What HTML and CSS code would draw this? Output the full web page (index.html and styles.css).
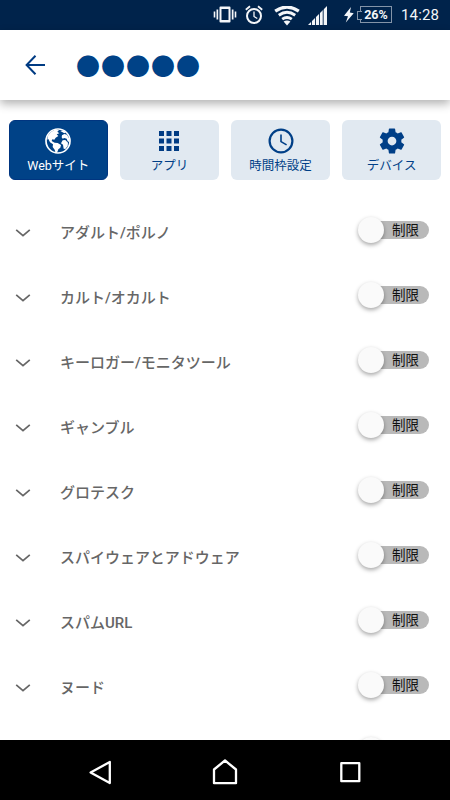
FILE: index.html
```html
<!DOCTYPE html>
<html lang="ja">
<head>
<meta charset="utf-8">
<title>Webサイト</title>
<link rel="stylesheet" href="styles.css">
</head>
<body>
<svg width="0" height="0" class="defs">
  <symbol id="chevron" viewBox="0 0 16 10"><path d="M1.2 1.8 8 7.6l6.8-5.8" fill="none" stroke="#666" stroke-width="1.7"/></symbol>
</svg>
<div class="status">
  <svg class="vibrate" width="24" height="20" viewBox="0 0 24 20" fill="#f4f6f9"><path fill-rule="evenodd" d="M7.5 1.5h9q1 0 1 1v14q0 1-1 1h-9q-1 0-1-1v-14q0-1 1-1zM8.5 4v11h7V4z"/><path d="M3.5 4.5h1.7v10H3.5zM18.8 4.5h1.7v10h-1.7zM.7 6.5h1.6v6H.7zM21.7 6.5h1.6v6h-1.6z"/></svg>
  <svg class="alarm" width="18" height="20" viewBox="0 0 18 20" fill="none" stroke="#f4f6f9"><circle cx="9" cy="11" r="7" stroke-width="2"/><path d="M9 6.5v5l3.3 2" stroke-width="1.3"/><path d="M.8 4.7 5 1.2M17.2 4.7 13 1.2" stroke-width="1.8"/></svg>
  <svg class="wifi" width="26" height="20" viewBox="0 0 26 20" fill="none" stroke="#f4f6f9"><path d="M1.2 5.1Q13-2.9 24.8 5.1" stroke-width="3.2"/><path d="M4.8 9.2Q13 3.4 21.2 9.2M8.2 13.1Q13 9.7 17.8 13.1" stroke-width="2.9"/><path d="M13 19.4 9.6 15.4Q13 13.4 16.4 15.4z" fill="#f4f6f9" stroke="none"/></svg>
  <svg class="signal" width="19" height="20" viewBox="0 0 19 20" fill="#f4f6f9"><path d="M0 19 19 0v19z"/><path d="M3.5 19v-5M7.5 19V9M11.5 19V5M15.2 19V1" stroke="#00234b" stroke-width=".9"/></svg>
  <svg class="bolt" width="10" height="16" viewBox="0 0 10 16" fill="#f4f6f9"><path d="M7 0 0 8.8l4 .5L1.8 15.5 9.7 6.2 5.8 5.5z"/></svg>
  <div class="battery"><span>26%</span></div>
  <div class="clock">14:28</div>
</div>
<header class="bar">
  <svg width="20" height="20" viewBox="0 0 20 20" fill="none" stroke="#003b83" stroke-width="2"><path d="M10.5 .8 1.6 10l8.9 9.2M1.6 10H20"/></svg>
  <h1>●●●●●</h1>
</header>
<main class="content">
  <nav class="tabs">
    <div class="tab active">
      <svg width="26" height="26" viewBox="0 0 78 78"><circle cx="39" cy="39" r="36" fill="none" stroke="#fff" stroke-width="5"/><path fill="#fff" d="M8 24 18 12 29 5l13 1-5 5 6 5-8 3 5 5-8 5-4 6-6-1-2 5 5 3 4 2 9 1 10 6-2 8-6 5-3 8-5 4-3-11-6-8 1-8-9-6-5-10-3 2zM46 9l9-2 8 6-5 3zM51 22l7-4 8 2 6 11 2 12-6-3-3-8-7-2-5 2-3-4zM53 37l8-1 8 8-1 10-7 9-5-1-2-12-6-4z"/></svg>
      <span>Webサイト</span>
    </div>
    <div class="tab">
      <svg width="26" height="26" viewBox="0 0 26 26" fill="#003b83"><path d="M3 3h5v5H3zM10.5 3h5v5h-5zM18 3h5v5h-5zM3 10.5h5v5H3zM10.5 10.5h5v5h-5zM18 10.5h5v5h-5zM3 18h5v5H3zM10.5 18h5v5h-5zM18 18h5v5h-5z"/></svg>
      <span>アプリ</span>
    </div>
    <div class="tab">
      <svg width="26" height="26" viewBox="0 0 26 26" fill="none" stroke="#003f87"><circle cx="13" cy="13" r="11.4" stroke-width="2.2"/><path d="M13 6.6v7l5.6 3.3" stroke-width="1.6"/></svg>
      <span>時間枠設定</span>
    </div>
    <div class="tab">
      <svg class="gear" width="30" height="30" viewBox="0 0 24 24" fill="#003f87"><path d="M19.43 12.98c.04-.32.07-.64.07-.98s-.03-.66-.07-.98l2.11-1.65c.19-.15.24-.42.12-.64l-2-3.46c-.12-.22-.39-.3-.61-.22l-2.49 1c-.52-.4-1.08-.73-1.69-.98l-.38-2.65C14.46 2.18 14.25 2 14 2h-4c-.25 0-.46.18-.49.42l-.38 2.65c-.61.25-1.17.59-1.69.98l-2.49-1c-.23-.09-.49 0-.61.22l-2 3.46c-.13.22-.07.49.12.64l2.11 1.65c-.04.32-.07.65-.07.98s.03.66.07.98l-2.11 1.65c-.19.15-.24.42-.12.64l2 3.46c.12.22.39.3.61.22l2.49-1c.52.4 1.08.73 1.69.98l.38 2.65c.03.24.24.42.49.42h4c.25 0 .46-.18.49-.42l.38-2.65c.61-.25 1.17-.59 1.69-.98l2.49 1c.23.09.49 0 .61-.22l2-3.46c.12-.22.07-.49-.12-.64l-2.11-1.65zM12 15.5c-1.93 0-3.5-1.57-3.5-3.5s1.57-3.5 3.5-3.5 3.5 1.57 3.5 3.5-1.57 3.5-3.5 3.5z"/></svg>
      <span>デバイス</span>
    </div>
  </nav>
  <div class="list">
    <div class="row"><svg><use href="#chevron"/></svg><span class="name">アダルト/ポルノ</span><div class="switch"><i></i><span>制限</span></div></div>
    <div class="row"><svg><use href="#chevron"/></svg><span class="name">カルト/オカルト</span><div class="switch"><i></i><span>制限</span></div></div>
    <div class="row"><svg><use href="#chevron"/></svg><span class="name">キーロガー/モニタツール</span><div class="switch"><i></i><span>制限</span></div></div>
    <div class="row"><svg><use href="#chevron"/></svg><span class="name">ギャンブル</span><div class="switch"><i></i><span>制限</span></div></div>
    <div class="row"><svg><use href="#chevron"/></svg><span class="name">グロテスク</span><div class="switch"><i></i><span>制限</span></div></div>
    <div class="row"><svg><use href="#chevron"/></svg><span class="name">スパイウェアとアドウェア</span><div class="switch"><i></i><span>制限</span></div></div>
    <div class="row"><svg><use href="#chevron"/></svg><span class="name">スパムURL</span><div class="switch"><i></i><span>制限</span></div></div>
    <div class="row"><svg><use href="#chevron"/></svg><span class="name">ヌード</span><div class="switch"><i></i><span>制限</span></div></div>
    <div class="row"><div class="switch"><i></i></div></div>
  </div>
</main>
<footer class="navbar">
  <svg width="26" height="28" viewBox="0 0 26 28"><path d="M22.8 4 3.6 14.5 22.8 25z"/></svg>
  <svg width="26" height="28" viewBox="0 0 26 28"><path d="M2 11.5 13 2.5l11 9v13.7H2z"/></svg>
  <svg width="26" height="28" viewBox="0 0 26 28"><path d="M4.3 5.2h18v18h-18z"/></svg>
</footer>
</body>
</html>
```
FILE: styles.css
```css
* { box-sizing: border-box; }
body {
  margin: 0;
  width: 450px;
  height: 800px;
  overflow: hidden;
  display: flex;
  flex-direction: column;
  background: #fff;
  font-family: Roboto, "Noto Sans CJK JP", sans-serif;
}
.defs { position: absolute; }
svg { display: block; flex: none; }
.status {
  height: 30px;
  flex: none;
  background: #00234b;
  color: #f4f6f9;
  display: flex;
  align-items: center;
  padding-left: 213px;
}
.alarm { margin-left: 8px; }
.wifi { margin: 2px 0 0 11px; }
.signal { margin: 2px 0 0 8px; }
.bolt { margin-left: 17px; }
.battery {
  margin: -1px 0 0 6px;
  width: 32px;
  height: 17px;
  border: 1px solid #8494a8;
  font-size: 12.5px;
  font-weight: 700;
  line-height: 15px;
  text-align: center;
  position: relative;
}
.battery::before {
  content: "";
  position: absolute;
  left: -4px;
  top: 4px;
  width: 4px;
  height: 7px;
  background: #00234b;
  border: 1px solid #8494a8;
  border-right: 0;
}
.clock { margin: 0 0 0 9px; font-size: 15px; font-weight: 400; letter-spacing: .15px; }
.bar {
  height: 70px;
  flex: none;
  display: flex;
  align-items: center;
  padding-left: 25px;
  background: #fff;
  box-shadow: 0 4px 9px rgba(0,0,0,.3);
  z-index: 1;
}
.bar h1 {
  margin: 0 0 0 31px;
  font: 400 24px/40px "Noto Sans CJK JP", sans-serif;
  letter-spacing: 1px;
  color: #004287;
}
.content { height: 640px; flex: none; overflow: hidden; }
.tabs {
  display: grid;
  grid-template-columns: repeat(4, 1fr);
  gap: 12.5px;
  padding: 20px 9px 0;
}
.tab {
  height: 60px;
  border-radius: 6px;
  background: #e1e9f1;
  color: #003f87;
  display: flex;
  flex-direction: column;
  align-items: center;
  font-size: 12.5px;
  line-height: 16px;
  white-space: nowrap;
}
.tab svg { margin: 8px 0 4px; }
.tab .gear { margin: 6px 0 2px; }
.tab.active { background: #004287; color: #fff; border: 1px solid #003580; }
.tab.active svg { margin-top: 7px; }
.list { padding-top: 20px; }
.row {
  height: 65px;
  display: flex;
  align-items: center;
  padding: 0 21px 0 15px;
}
.row > svg { width: 16px; height: 10px; margin-top: 1px; }
.name {
  margin-left: 29px;
  font-size: 15px;
  font-weight: 500;
  line-height: 20px;
  color: #666;
}
.switch {
  margin: 0 0 6px auto;
  width: 58px;
  height: 18px;
  border-radius: 9px;
  background: #b9b9b9;
  position: relative;
  padding-left: 21px;
  font-size: 13.5px;
  line-height: 18px;
  color: #111;
}
.switch i {
  position: absolute;
  left: -13px;
  top: -4px;
  width: 26px;
  height: 26px;
  border-radius: 50%;
  background: #fafafa;
  box-shadow: 0 2px 4px rgba(0,0,0,.35);
}
.navbar {
  height: 60px;
  flex: none;
  background: #000;
  display: flex;
  justify-content: center;
  align-items: center;
  gap: 99px;
  padding-top: 3px;
  z-index: 1;
}
.navbar path { fill: none; stroke: #fff; stroke-width: 2.3; stroke-linejoin: round; }
```
